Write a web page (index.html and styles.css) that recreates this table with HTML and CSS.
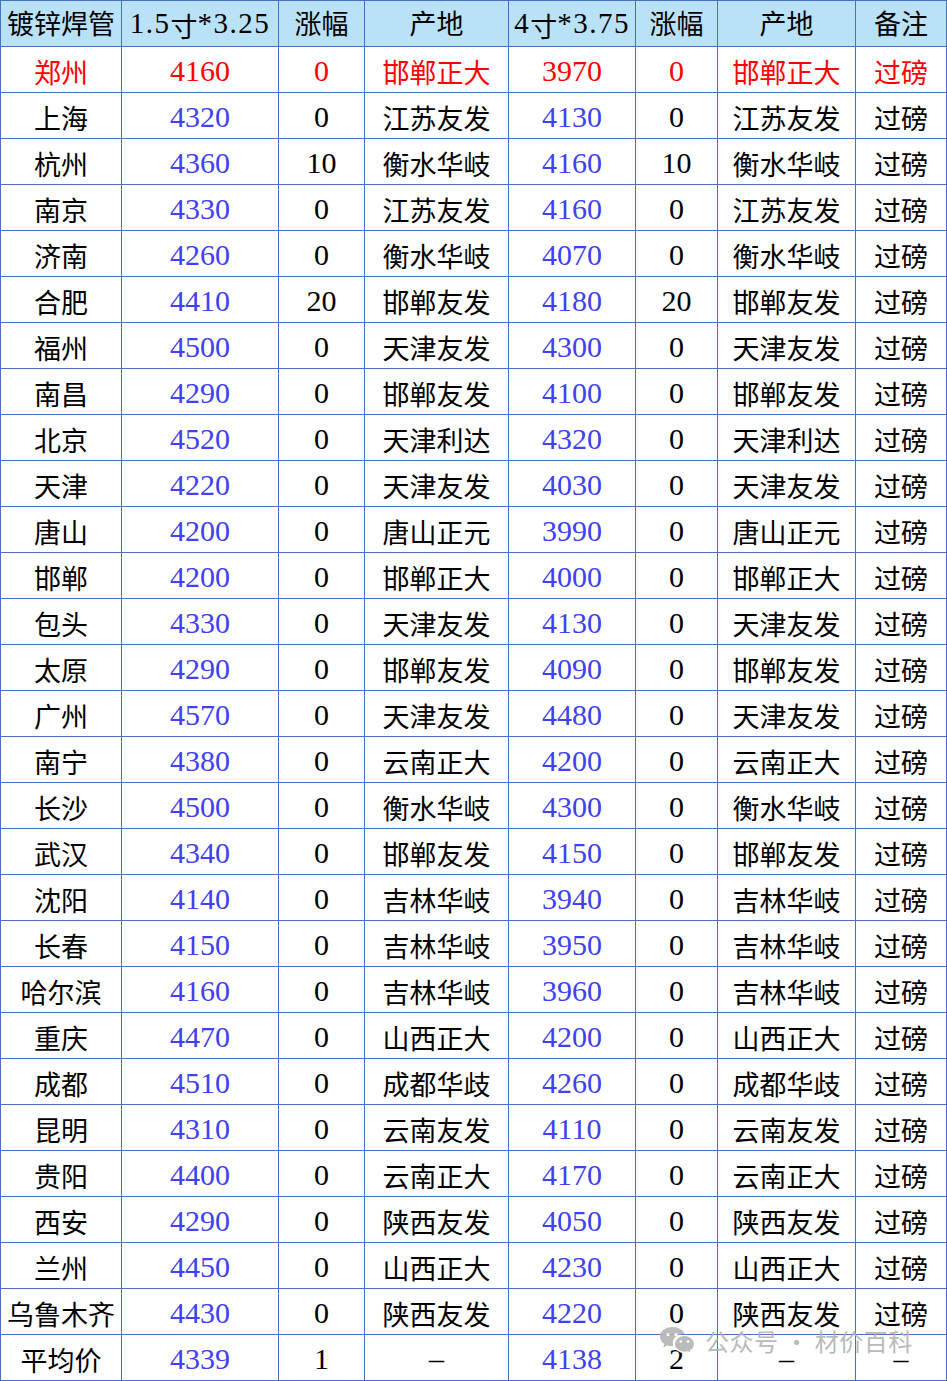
FILE: index.html
```html
<!DOCTYPE html>
<html lang="zh">
<head>
<meta charset="utf-8">
<title>镀锌焊管价格</title>
<link rel="stylesheet" href="styles.css">
</head>
<body>
<div class="sheet">
  <div class="grid" id="grid">
    <div class="c hd">镀锌焊管</div>
    <div class="c hd spec">1.5<span class="zh">寸</span>*3.25</div>
    <div class="c hd">涨幅</div>
    <div class="c hd">产地</div>
    <div class="c hd spec">4<span class="zh">寸</span>*3.75</div>
    <div class="c hd">涨幅</div>
    <div class="c hd">产地</div>
    <div class="c hd">备注</div>
  </div>
  <div class="watermark">
    <svg class="wx" width="36" height="32" viewBox="0 0 36 32">
      <path d="M13 2C6.4 2 1 6.3 1 11.6c0 3 1.7 5.6 4.4 7.4L4.3 22.6l4.3-2.2c1.4.4 2.9.6 4.4.6.4 0 .8 0 1.2 0-.3-.9-.4-1.8-.4-2.7 0-5.1 4.9-9.2 11-9.2h.9C24.5 4.9 19.3 2 13 2z" fill="#b4b4b4"/>
      <circle cx="9" cy="9.6" r="1.6" fill="#fff"/>
      <circle cx="17" cy="9.6" r="1.6" fill="#fff"/>
      <path d="M25.5 10.4c-5.6 0-10.2 3.8-10.2 8.5s4.6 8.5 10.2 8.5c1.2 0 2.4-.2 3.5-.5l3.6 1.9-1-3.1c2.5-1.6 4-4 4-6.8 0-4.7-4.5-8.5-10.1-8.5z" fill="#b4b4b4" stroke="#fff" stroke-width="1.4"/>
      <circle cx="21.8" cy="16.6" r="1.4" fill="#fff"/>
      <circle cx="29.2" cy="16.6" r="1.4" fill="#fff"/>
    </svg>
    <span class="wm-text">公众号 · 材价百科</span>
  </div>
</div>
<script>
var rows = [
["郑州","4160","0","邯郸正大","3970","0","邯郸正大","过磅","red"],
["上海","4320","0","江苏友发","4130","0","江苏友发","过磅"],
["杭州","4360","10","衡水华岐","4160","10","衡水华岐","过磅"],
["南京","4330","0","江苏友发","4160","0","江苏友发","过磅"],
["济南","4260","0","衡水华岐","4070","0","衡水华岐","过磅"],
["合肥","4410","20","邯郸友发","4180","20","邯郸友发","过磅"],
["福州","4500","0","天津友发","4300","0","天津友发","过磅"],
["南昌","4290","0","邯郸友发","4100","0","邯郸友发","过磅"],
["北京","4520","0","天津利达","4320","0","天津利达","过磅"],
["天津","4220","0","天津友发","4030","0","天津友发","过磅"],
["唐山","4200","0","唐山正元","3990","0","唐山正元","过磅"],
["邯郸","4200","0","邯郸正大","4000","0","邯郸正大","过磅"],
["包头","4330","0","天津友发","4130","0","天津友发","过磅"],
["太原","4290","0","邯郸友发","4090","0","邯郸友发","过磅"],
["广州","4570","0","天津友发","4480","0","天津友发","过磅"],
["南宁","4380","0","云南正大","4200","0","云南正大","过磅"],
["长沙","4500","0","衡水华岐","4300","0","衡水华岐","过磅"],
["武汉","4340","0","邯郸友发","4150","0","邯郸友发","过磅"],
["沈阳","4140","0","吉林华岐","3940","0","吉林华岐","过磅"],
["长春","4150","0","吉林华岐","3950","0","吉林华岐","过磅"],
["哈尔滨","4160","0","吉林华岐","3960","0","吉林华岐","过磅"],
["重庆","4470","0","山西正大","4200","0","山西正大","过磅"],
["成都","4510","0","成都华歧","4260","0","成都华歧","过磅"],
["昆明","4310","0","云南友发","4110","0","云南友发","过磅"],
["贵阳","4400","0","云南正大","4170","0","云南正大","过磅"],
["西安","4290","0","陕西友发","4050","0","陕西友发","过磅"],
["兰州","4450","0","山西正大","4230","0","山西正大","过磅"],
["乌鲁木齐","4430","0","陕西友发","4220","0","陕西友发","过磅"],
["平均价","4339","1","–","4138","2","–","–"]
];
var kinds = ["zh","price","num","zh","price","num","zh","zh"];
var grid = document.getElementById("grid");
rows.forEach(function (r) {
  for (var i = 0; i < 8; i++) {
    var d = document.createElement("div");
    var k = kinds[i];
    if (r[i] === "–") k = "num";
    d.className = "c " + k + (r[8] === "red" ? " red" : "");
    d.textContent = r[i];
    grid.appendChild(d);
  }
});
</script>
</body>
</html>
```
FILE: styles.css
```css
html, body {
  margin: 0;
  padding: 0;
  background: #ffffff;
}

.sheet {
  position: relative;
  width: 947px;
  height: 1381px;
}

.grid {
  display: grid;
  grid-template-columns: 120px 156px 85px 143px 126px 81px 137px 90px;
  grid-auto-rows: 45px;
  gap: 1px;
  padding: 1px;
  background: #4472c4;
  width: 945px;
}

.c {
  background: #ffffff;
  display: flex;
  align-items: center;
  justify-content: center;
  white-space: nowrap;
  color: #000000;
  font-family: "Noto Sans CJK SC", sans-serif;
  font-size: 27px;
  line-height: 1;
  padding-top: 3px;
  box-sizing: border-box;
}

.c.hd {
  background: #b9e2f8;
  font-family: "Liberation Serif", "Noto Sans CJK SC", serif;
}

.c.hd.spec {
  font-size: 29px;
  letter-spacing: 1.5px;
  padding-top: 0;
}

.c.hd .zh {
  font-family: "Noto Sans CJK SC", sans-serif;
  font-size: 27px;
  letter-spacing: 0;
  padding-top: 3px;
}

.c.price,
.c.num {
  font-family: "Liberation Serif", serif;
  font-size: 30px;
  padding-top: 2px;
}

.c.price {
  color: #4040f4;
}

.c.red {
  color: #ff0000;
}

.watermark {
  position: absolute;
  left: 659px;
  top: 1325px;
  display: flex;
  align-items: center;
  gap: 10px;
  opacity: 0.9;
}

.wx {
  display: block;
}

.wm-text {
  font-family: "Noto Sans CJK SC", sans-serif;
  font-size: 24px;
  line-height: 1;
  color: #b3b3b3;
  letter-spacing: 0.5px;
}
```
